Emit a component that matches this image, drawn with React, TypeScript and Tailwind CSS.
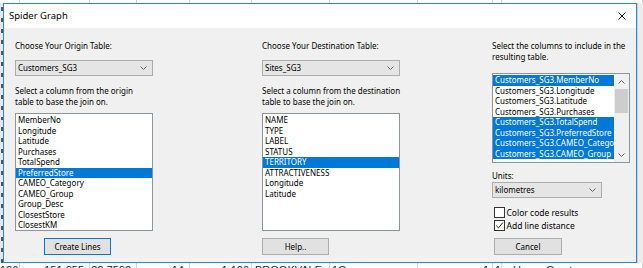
import React from "react";

// spreadsheet columns peeking out behind the dialog
const sheetCols = [
  { w: 20, text: "126", align: "text-right pr-[2px]" },
  { w: 70, text: "151,255", align: "text-right pr-[5px]" },
  { w: 47, text: "22.7502", align: "text-right pr-[5px]" },
  { w: 53, text: "14", align: "text-right pr-[5px]" },
  { w: 62, text: "1,106", align: "text-right pr-[2px]" },
  { w: 78, text: "BROOKVALE", align: "text-left pl-[3px]" },
  { w: 88, text: "1C", align: "text-left pl-[2px]" },
  { w: 75, text: "1", align: "text-right pr-[3px]" },
  { w: 9, text: "1", align: "text-left pl-[2px]" },
  { w: 141, text: "Upper Crust", align: "text-left pl-[11px]" },
];

const originCols = [
  "MemberNo",
  "Longitude",
  "Latitude",
  "Purchases",
  "TotalSpend",
  "PreferredStore",
  "CAMEO_Category",
  "CAMEO_Group",
  "Group_Desc",
  "ClosestStore",
  "ClosestKM",
];

const destCols = ["NAME", "TYPE", "LABEL", "STATUS", "TERRITORY", "ATTRACTIVENESS", "Longitude", "Latitude"];

const resultCols = [
  { name: "Customers_SG3.MemberNo", on: true },
  { name: "Customers_SG3.Longitude", on: false },
  { name: "Customers_SG3.Latitude", on: false },
  { name: "Customers_SG3.Purchases", on: false },
  { name: "Customers_SG3.TotalSpend", on: true },
  { name: "Customers_SG3.PreferredStore", on: true },
  { name: "Customers_SG3.CAMEO_Category", on: true },
  { name: "Customers_SG3.CAMEO_Group", on: true },
];

const Chevron = ({ up = false }: { up?: boolean }) => (
  <svg width="7" height="4" viewBox="0 0 7 4" className="shrink-0">
    <path
      d={up ? "M0.5 3.5 L3.5 0.5 L6.5 3.5" : "M0.5 0.5 L3.5 3.5 L6.5 0.5"}
      fill="none"
      stroke="#606060"
      strokeWidth="1"
    />
  </svg>
);

const Combo = ({ value, width }: { value: string; width: string }) => (
  <div
    className={`${width} h-[16px] flex items-center justify-between bg-[#e5e5e5] border border-[#acacac] pl-[2px] pr-[5px]`}
  >
    <span>{value}</span>
    <Chevron />
  </div>
);

const ListBox = ({ items, selected }: { items: string[]; selected: string }) => (
  <div className="w-[138px] h-[118px] bg-white border border-[#8f949c] pt-[1px] overflow-hidden">
    {items.map((item) => (
      <div
        key={item}
        className={`h-[10.5px] leading-[10.5px] pl-[2px] whitespace-nowrap ${
          item === selected ? "bg-[#0078d7] text-white" : ""
        }`}
      >
        {item}
      </div>
    ))}
  </div>
);

const Btn = ({ label, primary, className }: { label: string; primary?: boolean; className?: string }) => (
  <div
    className={`h-[17px] flex items-center justify-center bg-[#e1e1e1] border ${
      primary ? "border-[#0078d7]" : "border-[#adadad]"
    } ${className ?? ""}`}
  >
    {label}
  </div>
);

const Check = ({ label, checked }: { label: string; checked?: boolean }) => (
  <div className="h-[11px] flex items-center ml-[2px]">
    <div className="w-[11px] h-[11px] bg-white border border-[#333] flex items-center justify-center">
      {checked && (
        <svg width="9" height="9" viewBox="0 0 9 9">
          <path d="M1.2 4.6 L3.5 6.9 L7.8 1.6" fill="none" stroke="#222" strokeWidth="1" />
        </svg>
      )}
    </div>
    <span className="ml-[1.5px] text-[8.5px] leading-[11px]">{label}</span>
  </div>
);

export default function App() {
  return (
    <div className="w-[643px] h-[268px] overflow-hidden bg-white text-black font-['Noto_Sans',sans-serif] text-[8px]">
      {/* sheet header strip */}
      <div className="h-[3px] flex bg-white">
        {sheetCols.map((c, i) => (
          <div key={i} style={{ width: c.w }} className="shrink-0 h-full border-r border-[#d4d4d4]" />
        ))}
      </div>

      <div className="flex h-[260px]">
        {/* row header fragments */}
        <div className="w-[3px] bg-[#e2e8f0] flex flex-col items-end pt-[4px] gap-[7px]">
          {Array.from({ length: 24 }).map((_, i) => (
            <div key={i} className="w-[2px] h-[4px] bg-[#555]" />
          ))}
        </div>

        {/* dialog */}
        <div className="w-[634px] h-[260px] border border-[#2b88d8] flex flex-col">
          <div className="h-[24px] bg-white flex items-center justify-between pl-[5px] pr-[10px]">
            <span className="text-[9.5px]">Spider Graph</span>
            <svg width="8" height="8" viewBox="0 0 8 8">
              <path d="M0.5 0.5 L7.5 7.5 M7.5 0.5 L0.5 7.5" stroke="#111" strokeWidth="1" />
            </svg>
          </div>

          <div className="flex-1 bg-[#f0f0f0] flex pl-[11px] pt-[12px]">
            {/* origin */}
            <div className="w-[138px] flex flex-col">
              <div className="leading-[11px] whitespace-nowrap">Choose Your Origin Table:</div>
              <div className="mt-[9px]">
                <Combo value="Customers_SG3" width="w-[138px]" />
              </div>
              <div className="mt-[10px] leading-[10.5px] whitespace-nowrap">
                Select a column from the origin
                <br />
                table to base the join on.
              </div>
              <div className="mt-[6px]">
                <ListBox items={originCols} selected="PreferredStore" />
              </div>
              <Btn label="Create Lines" primary className="mt-[7px] ml-[29px] w-[67px]" />
            </div>

            {/* destination */}
            <div className="w-[138px] ml-[109px] flex flex-col">
              <div className="leading-[11px] whitespace-nowrap">Choose Your Destination Table:</div>
              <div className="mt-[9px]">
                <Combo value="Sites_SG3" width="w-[138px]" />
              </div>
              <div className="mt-[10px] leading-[10.5px] whitespace-nowrap">
                Select a column from the destination
                <br />
                table to base the join on.
              </div>
              <div className="mt-[6px]">
                <ListBox items={destCols} selected="TERRITORY" />
              </div>
              <Btn label="Help.." className="mt-[7px] w-[67px]" />
            </div>

            {/* result columns */}
            <div className="w-[138px] ml-[92px] flex flex-col">
              <div className="leading-[11px] whitespace-nowrap">
                Select the columns to include in the
                <br />
                resulting table.
              </div>
              <div className="mt-[11px] w-[138px] h-[90px] bg-white border border-[#8f949c] flex">
                <div className="flex-1 min-w-0 pt-[1px] overflow-hidden">
                  {resultCols.map((c) => (
                    <div
                      key={c.name}
                      className={`h-[10.5px] leading-[10.5px] pl-[2px] whitespace-nowrap ${
                        c.on ? "bg-[#0078d7] text-white" : ""
                      }`}
                    >
                      {c.name}
                    </div>
                  ))}
                </div>
                <div className="w-[15px] bg-[#f0f0f0] flex flex-col">
                  <div className="h-[15px] flex items-center justify-center">
                    <Chevron up />
                  </div>
                  <div className="h-[24px] mx-[1px] bg-[#cdcdcd]" />
                  <div className="flex-1" />
                  <div className="h-[15px] flex items-center justify-center">
                    <Chevron />
                  </div>
                </div>
              </div>
              <div className="mt-[7px] leading-[11px]">Units:</div>
              <div className="mt-[1px]">
                <Combo value="kilometres" width="w-[110px]" />
              </div>
              <div className="mt-[9px]">
                <Check label="Color code results" />
              </div>
              <div className="mt-[2px]">
                <Check label="Add line distance" checked />
              </div>
              <Btn label="Cancel" className="mt-[7px] ml-[2px] w-[68px]" />
            </div>
          </div>
        </div>

        <div className="flex-1 bg-[#ececec] border-l border-[#d0d0d0]" />
      </div>

      {/* sheet row below the dialog */}
      <div className="h-[5px] overflow-hidden flex bg-white text-[11px] leading-[12px] text-[#222] font-['Liberation_Sans',sans-serif]">
        {sheetCols.map((c, i) => (
          <div
            key={i}
            style={{ width: c.w }}
            className={`shrink-0 pt-[1px] border-r border-[#d4d4d4] whitespace-nowrap ${c.align}`}
          >
            {c.text}
          </div>
        ))}
      </div>
    </div>
  );
}
